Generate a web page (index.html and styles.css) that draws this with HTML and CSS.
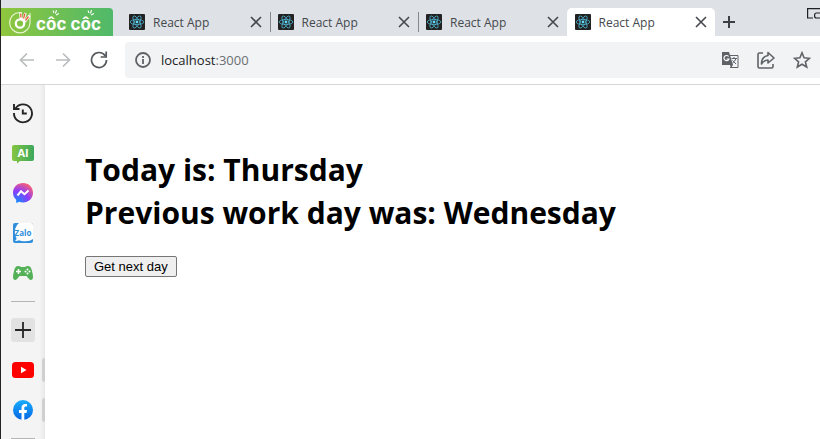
FILE: index.html
```html
<!DOCTYPE html>
<html lang="en">
<head>
<meta charset="utf-8">
<title>React App</title>
<link rel="stylesheet" href="styles.css">
</head>
<body>
<svg class="defs" aria-hidden="true">
  <symbol id="react" viewBox="0 0 16 16">
    <rect width="16" height="16" rx="1" fill="#222"/>
    <g fill="none" stroke="#4fb3cf" stroke-width=".8">
      <ellipse cx="8" cy="8" rx="6.8" ry="2.6"/>
      <ellipse cx="8" cy="8" rx="6.8" ry="2.6" transform="rotate(60 8 8)"/>
      <ellipse cx="8" cy="8" rx="6.8" ry="2.6" transform="rotate(120 8 8)"/>
    </g>
    <circle cx="8" cy="8" r="1.4" fill="#61dafb"/>
  </symbol>
  <symbol id="close" viewBox="0 0 12 12"><path d="M1 1l10 10m0-10L1 11" fill="none" stroke="#45484c" stroke-width="1.6"/></symbol>
</svg>
<div class="window">
  <header class="tabbar">
    <button class="brand" aria-label="Menu">
      <svg width="24" height="24" viewBox="0 0 24 24" fill="none">
        <path d="M14 2.500H11A10.200 10.200 0 1 0 22 13V3" stroke="#e6f4cf" stroke-width="1.200"/>
        <circle cx="12" cy="13.500" r="4.200" stroke="#fff" stroke-width="2.200"/>
        <path d="M13 9.500L12.500 3M15 10.500L17.500 3M16.500 12L21.500 5.500" stroke="#fff" stroke-width="2.600"/>
        <path d="M13 7.500L12.700 3.500M15.500 8.500L17 3.500M17.500 10.500L20.500 6.500" stroke="#ef5a3c" stroke-width="1.300"/>
      </svg>
      <span class="wordmark">côc côc
        <svg class="rays" width="64" height="6" viewBox="0 0 64 6" fill="none" stroke="#fff" stroke-width="1.100"><path d="M18 3l-1-2.500M19.500 3.500l1-3.500M20 5l3-1.500M53 3l-1-2.500M54.500 3.500l1-3.500M55 5l3-1.500"/></svg>
      </span>
    </button>
    <nav class="tabs">
      <div class="tab"><svg class="fav"><use href="#react"/></svg><a href="#">React App</a><button aria-label="Close tab"><svg><use href="#close"/></svg></button></div>
      <div class="tab"><svg class="fav"><use href="#react"/></svg><a href="#">React App</a><button aria-label="Close tab"><svg><use href="#close"/></svg></button></div>
      <div class="tab"><svg class="fav"><use href="#react"/></svg><a href="#">React App</a><button aria-label="Close tab"><svg><use href="#close"/></svg></button></div>
      <div class="tab active"><svg class="fav"><use href="#react"/></svg><a href="#">React App</a><button aria-label="Close tab"><svg><use href="#close"/></svg></button></div>
    </nav>
    <button class="newtab" aria-label="New tab"><svg width="12" height="12" viewBox="0 0 12 12"><path d="M6 0v12M0 6h12" stroke="#3c4043" stroke-width="2"/></svg></button>
    <button class="corner" aria-label="Window options"><svg width="13" height="14" viewBox="0 0 13 14" fill="none" stroke="#202124" stroke-width="1.200"><path d="M13 .6H.6v9.400H6"/><path d="M13 5H9.500Q7.600 5 7.600 7v1q0 2 2 2H13"/></svg></button>
  </header>
  <div class="toolbar">
    <button aria-label="Back"><svg width="16" height="16" viewBox="0 0 16 16"><path d="M15 8H2M8 1.500L1.500 8 8 14.500" fill="none" stroke="#babcbe" stroke-width="1.700"/></svg></button>
    <button aria-label="Forward"><svg width="16" height="16" viewBox="0 0 16 16"><path d="M1 8h13M8 1.500L14.500 8 8 14.500" fill="none" stroke="#babcbe" stroke-width="1.700"/></svg></button>
    <button aria-label="Reload"><svg width="18" height="18" viewBox="0 0 18 18"><path d="M15.200 4.800A7.500 7.500 0 1 0 16.500 9M16.200 .5v5.500h-5.500" fill="none" stroke="#54585c" stroke-width="1.700"/></svg></button>
    <div class="address">
      <svg width="16" height="16" viewBox="0 0 16 16"><circle cx="8" cy="8" r="7" fill="none" stroke="#5f6368" stroke-width="1.800"/><path d="M8 7v5M8 4v2" stroke="#5f6368" stroke-width="1.800"/></svg>
      <a class="url" href="#">localhost<span>:3000</span></a>
      <button aria-label="Translate"><svg width="18" height="18" viewBox="0 0 18 18"><path d="M8 4.500h9v12H9" fill="#f1f3f4" stroke="#5f6368"/><path d="M1 1h7l4 13H1z" fill="#5f6368"/><path d="M7.600 5.500A2.600 2.600 0 1 0 8 8H5.500" fill="none" stroke="#fff" stroke-width="1.200"/><path d="M10.500 7.500H16M13 6v1.500M15 7.500q-1 3-3.500 4.500M11.500 9.500L15 13" fill="none" stroke="#5f6368"/><path d="M9 14h3l-2 3z" fill="#5f6368"/></svg></button>
      <button aria-label="Share"><svg width="18" height="18" viewBox="0 0 18 18" fill="none" stroke="#5f6368" stroke-width="1.600"><path d="M6 2H2.500Q1 2 1 3.500v12Q1 17 2.500 17h12q1.500 0 1.500-1.500V13"/><path d="M11 1.500L17 7l-6 5V9Q7 9 4.500 13 4.500 5.500 11 4.500z" stroke-linejoin="round"/></svg></button>
      <button aria-label="Bookmark"><svg width="18" height="18" viewBox="0 0 18 18"><path d="M9 1.800l2.100 5 5.400.5-4.100 3.500 1.300 5.200L9 13.200 4.300 16l1.300-5.200L1.500 7.300l5.400-.5z" fill="none" stroke="#5f6368" stroke-width="1.600"/></svg></button>
    </div>
  </div>
  <div class="body">
    <aside class="sidebar">
      <button aria-label="History"><svg width="22" height="22" viewBox="0 0 22 22" fill="none" stroke="#252525" stroke-width="1.900"><path d="M3.600 6.200A9 9 0 1 1 2 11M2 2v5h5.500M10.800 7.500v4h4"/></svg></button>
      <button aria-label="AI chat" class="ai"><svg width="22" height="20" viewBox="0 0 22 20"><defs><linearGradient id="g1"><stop stop-color="#86c540"/><stop offset="1" stop-color="#3ba85c"/></linearGradient></defs><path d="M2 1h18q2 0 2 2v12q0 2-2 2H8l-3 2.500V17H2q-2 0-2-2V3q0-2 2-2z" fill="url(#g1)"/></svg><span>AI</span></button>
      <button aria-label="Messenger"><svg width="20" height="20" viewBox="0 0 20 20"><defs><radialGradient id="g2" cx=".2" cy="1" r="1.100"><stop stop-color="#0a91ff"/><stop offset=".55" stop-color="#8a3cff"/><stop offset="1" stop-color="#ff6070"/></radialGradient></defs><path d="M10 0C4.300 0 0 4.200 0 9.700c0 3 1.200 5.300 3.200 7V20l3.100-1.200c1.100.4 2.400.6 3.700.6 5.700 0 10-4.200 10-9.700S15.700 0 10 0z" fill="url(#g2)"/><path d="M4.500 12.500L8 8.200l3.500 3 4-3.700" fill="none" stroke="#fff" stroke-width="2"/></svg></button>
      <button aria-label="Zalo" class="zalo"><svg width="20" height="20" viewBox="0 0 20 20"><rect width="20" height="20" rx="2" fill="#2f8fdc"/><path d="M6 0h12q2 0 2 2v14q-3 2.500-9 2.200-3 0-5-1-1.500 1-4 .8Q4 16.500 3.500 15 1 11 2.300 5.500 3.200 2 6 0z" fill="#fff"/></svg><span>Zalo</span></button>
      <button aria-label="Games"><svg width="20" height="14" viewBox="0 0 20 14"><path d="M5 0q2 0 3 1h4q1-1 3-1 3 0 4 5 1 4 1 6 0 3-2.500 3-1 0-4-4h-7q-3 4-4 4Q0 14 0 11q0-2 1-6Q2 0 5 0z" fill="#55b158"/><path d="M5.500 3v5M3 5.500h5" stroke="#fff" stroke-width="1.500"/><g fill="#fff"><circle cx="14.500" cy="3.500" r="1"/><circle cx="14.500" cy="7.500" r="1"/><circle cx="12.500" cy="5.500" r="1"/><circle cx="16.500" cy="5.500" r="1"/></g></svg></button>
      <hr>
      <button aria-label="Add" class="add"><svg width="16" height="16" viewBox="0 0 16 16"><path d="M8 0v16M0 8h16" stroke="#252525" stroke-width="1.800"/></svg></button>
      <button aria-label="YouTube" class="pinned"><svg width="22" height="16" viewBox="0 0 22 16"><rect width="22" height="16" rx="3.500" fill="#f00"/><path d="M9 4.800v6.400L14.500 8z" fill="#fff"/></svg></button>
      <button aria-label="Facebook" class="pinned"><svg width="20" height="20" viewBox="0 0 20 20"><defs><linearGradient id="g3" x2="0" y2="1"><stop stop-color="#19aefe"/><stop offset="1" stop-color="#0565e2"/></linearGradient></defs><circle cx="10" cy="10" r="10" fill="url(#g3)"/><path d="M8.500 20v-7H6v-2.900h2.500V8c0-2.600 1.500-4 3.800-4 .9 0 1.700.1 1.700.1v2.500h-1.200c-1.200 0-1.500.7-1.500 1.500v2h2.700l-.5 2.900h-2.200v7z" fill="#fff"/></svg></button>
      <hr>
    </aside>
    <main>
      <h1>Today is: Thursday<br>Previous work day was: Wednesday</h1>
      <button class="next">Get next day</button>
    </main>
  </div>
</div>
</body>
</html>
```
FILE: styles.css
```css
* { box-sizing: border-box; }
body { margin: 0; background: #fff; font-family: "Open Sans", "Noto Sans", sans-serif; }
svg { display: block; flex: none; }
a { color: inherit; text-decoration: none; }
button { padding: 0; border: 0; background: none; font: inherit; color: inherit; }
.defs { position: absolute; width: 0; height: 0; }
.window { display: flex; flex-direction: column; height: 100vh; border-left: 1px solid #242424; overflow: hidden; }

.tabbar { display: flex; align-items: flex-end; height: 36px; flex: none; background: #dee1e6; }
.brand { display: flex; align-items: center; gap: 4px; width: 112px; height: 28px; padding-left: 7px; margin-right: 8px; border-radius: 0 4px 0 0; background: linear-gradient(90deg, #8fc63d, #4fb96a); color: #fff; }
.wordmark { position: relative; padding-top: 4px; font-family: Inter, "Open Sans", sans-serif; font-size: 17px; line-height: 20px; font-weight: 700; white-space: nowrap; }
.rays { position: absolute; left: 0; top: 0; }
.tabs { display: flex; flex: 0 1 594px; min-width: 0; }
.tab { display: flex; align-items: center; flex: 1 1 0; min-width: 0; height: 28px; padding: 0 8px; color: #45484c; font-size: 12px; position: relative; }
.tab + .tab:not(.active)::before { content: ""; position: absolute; left: 0; top: 4px; bottom: 4px; width: 1px; background: #85888c; }
.fav { width: 16px; height: 16px; margin-right: 8px; }
.tab a { flex: 1; min-width: 0; overflow: hidden; white-space: nowrap; }
.tab button svg { width: 12px; height: 12px; }
.active { background: #fff; border-radius: 5px 5px 0 0; }
.newtab { display: grid; place-items: center; width: 28px; height: 28px; }
.corner { align-self: flex-start; margin: 8px 0 0 auto; }

.toolbar { display: flex; align-items: center; gap: 20px; height: 49px; flex: none; padding-left: 18px; border-bottom: 1px solid #d5d7d9; }
.toolbar > button { display: flex; justify-content: center; width: 16px; }
.address { display: flex; align-items: center; flex: 1; gap: 18px; height: 36px; margin-left: -2px; padding: 0 9px 0 10px; border-radius: 4px 0 0 4px; background: #f1f3f4; }
.url { flex: 1; margin-left: -8px; color: #202124; font-size: 13px; }
.url span { color: #6b6f73; }

.body { display: flex; flex: 1; min-height: 0; }
.sidebar { display: flex; flex-direction: column; align-items: center; flex: none; width: 44px; padding-top: 8px; background: linear-gradient(90deg, #f4f4f4 88%, #e8e8e8); overflow: hidden; }
.sidebar button { position: relative; display: grid; place-items: center; flex: none; width: 44px; height: 40px; }
.sidebar span { position: absolute; inset: 0; display: grid; place-items: center; color: #fff; font-weight: 700; font-size: 11px; line-height: 38px; }
.sidebar .zalo span { color: #2f8fdc; font-size: 8px; }
.sidebar .ai { padding-top: 1px; }
.sidebar hr { flex: none; width: 24px; height: 1px; margin: 8px 0; border: 0; background: #b5b5b5; }
.add svg { padding: 4px; width: 24px; height: 24px; border-radius: 3px; background: #e2e2e2; }
.pinned::after { content: ""; position: absolute; right: 0; top: 8px; width: 3px; height: 24px; border-radius: 3px 0 0 3px; background: #cfcfcf; }

main { flex: 1; min-width: 0; padding: 63px 40px; }
h1 { margin: 0 0 22px; font-size: 30px; line-height: 43px; font-weight: 700; color: #000; }
.next { height: 21px; padding: 0 8px; border: 1px solid #767676; border-radius: 2px; background: #efefef; color: #000; font: 13px "Liberation Sans", Arial, sans-serif; display: block; }
```
